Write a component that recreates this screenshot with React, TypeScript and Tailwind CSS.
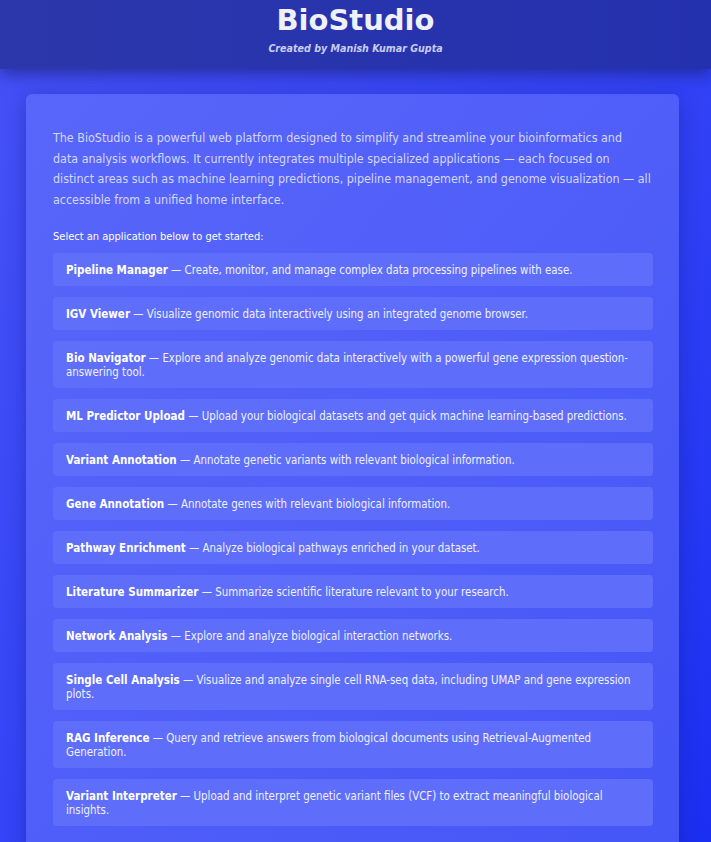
const apps = [
  { name: "Pipeline Manager", desc: "Create, monitor, and manage complex data processing pipelines with ease." },
  { name: "IGV Viewer", desc: "Visualize genomic data interactively using an integrated genome browser." },
  { name: "Bio Navigator", desc: "Explore and analyze genomic data interactively with a powerful gene expression question-answering tool." },
  { name: "ML Predictor Upload", desc: "Upload your biological datasets and get quick machine learning-based predictions." },
  { name: "Variant Annotation", desc: "Annotate genetic variants with relevant biological information." },
  { name: "Gene Annotation", desc: "Annotate genes with relevant biological information." },
  { name: "Pathway Enrichment", desc: "Analyze biological pathways enriched in your dataset." },
  { name: "Literature Summarizer", desc: "Summarize scientific literature relevant to your research." },
  { name: "Network Analysis", desc: "Explore and analyze biological interaction networks." },
  { name: "Single Cell Analysis", desc: "Visualize and analyze single cell RNA-seq data, including UMAP and gene expression plots." },
  { name: "RAG Inference", desc: "Query and retrieve answers from biological documents using Retrieval-Augmented Generation." },
  { name: "Variant Interpreter", desc: "Upload and interpret genetic variant files (VCF) to extract meaningful biological insights." },
];

export default function App() {
  return (
    <div className="min-h-[842px] bg-gradient-to-br from-[#4652f6] via-[#3444f6] to-[#1a2ef2] font-['DejaVu_Sans_Condensed','DejaVu_Sans',sans-serif] text-white">
      <header className="relative z-10 h-[69px] bg-gradient-to-r from-[#2c37ab] to-[#2431ae] text-center shadow-[0_6px_14px_rgba(20,25,110,0.55)]">
        <h1 className="pt-[2px] text-[29px] font-bold leading-[36px] text-[#f0f0f8] font-['DejaVu_Sans',sans-serif]">BioStudio</h1>
        <p className="mt-[3px] text-[10.6px] font-bold italic text-[#c9cdf0]">Created by Manish Kumar Gupta</p>
      </header>

      <main className="pl-[26px] pr-[32px] pt-[25px]">
        <div className="rounded-md bg-gradient-to-br from-[#5966fa] to-[#4556f7] px-[26px] pt-[34px] pb-8 shadow-[0_4px_20px_rgba(20,30,150,0.45)]">
          {/* line breaks follow the original layout */}
          <p className="whitespace-nowrap pl-px text-[12.4px] leading-[20.5px] text-[#d4d7fc]">
            The BioStudio is a powerful web platform designed to simplify and streamline your bioinformatics and
            <br />
            data analysis workflows. It currently integrates multiple specialized applications — each focused on
            <br />
            distinct areas such as machine learning predictions, pipeline management, and genome visualization — all
            <br />
            accessible from a unified home interface.
          </p>
          <p className="mt-[20px] pl-px text-[11px] leading-[14px] text-white">Select an application below to get started:</p>
          <ul className="mt-[9px] flex flex-col gap-[11px] pl-px">
            {apps.map((a) => (
              <li key={a.name} className="rounded bg-[#6170fa]/90 px-[13px] py-[9.5px] text-[11.4px] leading-[14px] text-[#eef0ff]">
                <span className="font-bold text-white text-[11.5px]">{a.name}</span> — {a.desc}
              </li>
            ))}
          </ul>
        </div>
      </main>
    </div>
  );
}
